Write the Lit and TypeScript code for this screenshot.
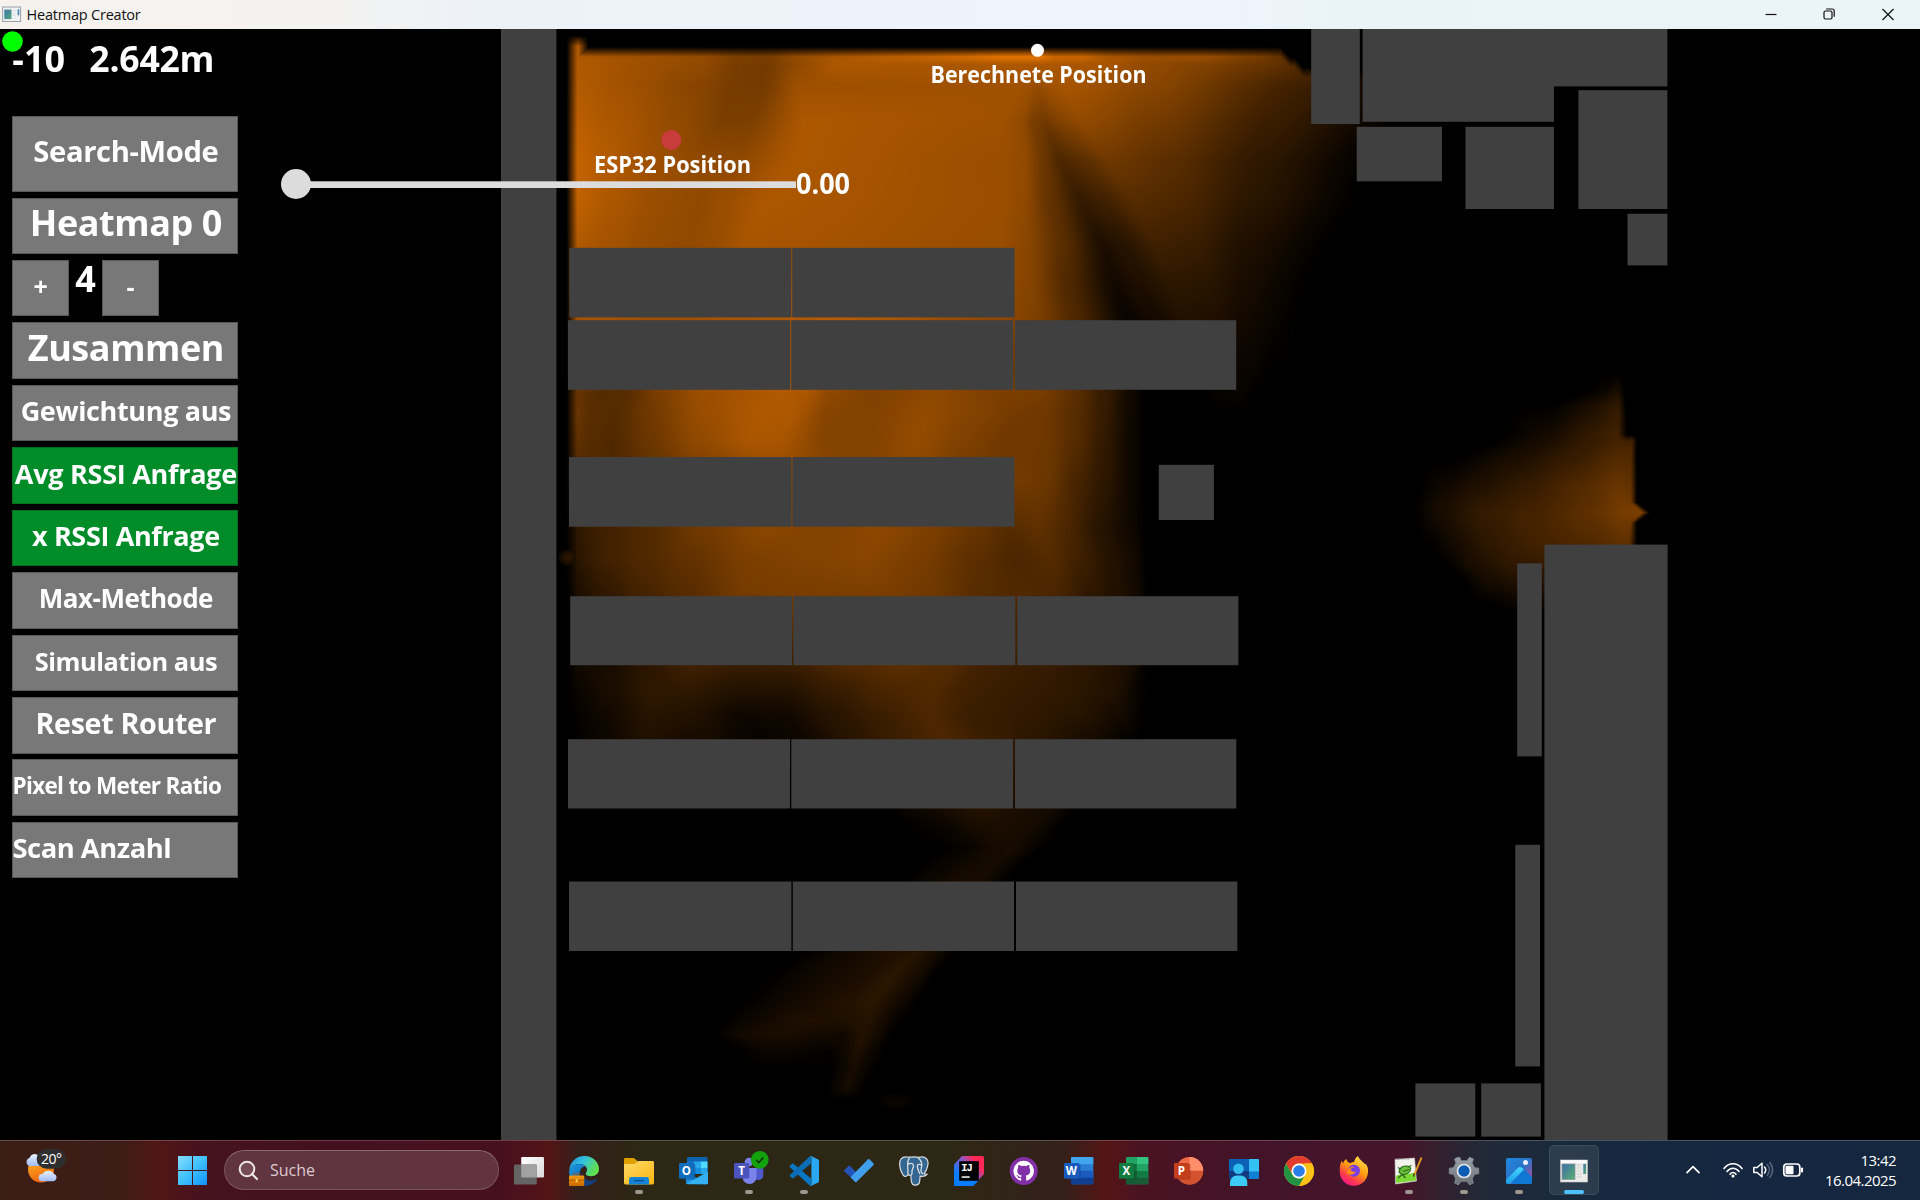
import { LitElement, html, css, svg, type TemplateResult } from "lit";
import { customElement, property } from "lit/decorators.js";
import { classMap } from "lit/directives/class-map.js";

/* ------------------------------------------------------------------ */
/* Heat field: rows of [x, intensity] stops, blended between rows.     */
/* Neighbouring rows with the same stop count are warped into each     */
/* other, so slanted ridges and valleys stay continuous.               */
/* ------------------------------------------------------------------ */

type Row = { y: number; s: number[] };

const MAIN: Row[] = [
  { y: 56, s: [572, 175, 640, 160, 700, 150, 740, 125, 765, 122, 800, 150, 840, 172, 900, 190, 960, 210, 1000, 232, 1040, 232, 1055, 205, 1080, 205, 1110, 170, 1150, 155, 1200, 155, 1260, 120, 1284, 95, 1311, 80] },
  { y: 64, s: [572, 178, 640, 158, 700, 145, 740, 118, 765, 115, 800, 145, 835, 172, 900, 170, 1000, 172, 1040, 172, 1100, 168, 1150, 145, 1200, 130, 1260, 105, 1300, 85, 1340, 60] },
  { y: 85, s: [572, 180, 620, 162, 700, 135, 735, 118, 762, 116, 800, 158, 1020, 160, 1030, 157, 1034, 152, 1038, 150, 1050, 162, 1065, 168, 1150, 138, 1300, 62, 1400, 0] },
  { y: 120, s: [572, 188, 610, 172, 680, 145, 725, 122, 750, 124, 805, 172, 1000, 160, 1022, 145, 1032, 122, 1044, 114, 1062, 132, 1080, 146, 1160, 115, 1270, 58, 1400, 0] },
  { y: 160, s: [572, 200, 600, 182, 650, 158, 700, 145, 735, 142, 795, 172, 1000, 154, 1024, 146, 1044, 105, 1060, 76, 1085, 92, 1108, 110, 1170, 90, 1260, 46, 1372, 0] },
  { y: 200, s: [572, 195, 610, 172, 660, 152, 700, 145, 725, 155, 765, 172, 1000, 155, 1022, 145, 1050, 98, 1080, 52, 1105, 64, 1132, 86, 1180, 76, 1255, 41, 1360, 0] },
  { y: 245, s: [572, 178, 610, 162, 650, 150, 690, 145, 712, 150, 745, 168, 1000, 153, 1025, 138, 1062, 90, 1102, 28, 1125, 38, 1155, 62, 1195, 56, 1245, 30, 1332, 0] },
  { y: 280, s: [572, 172, 610, 168, 650, 165, 690, 162, 720, 165, 760, 170, 1000, 150, 1028, 134, 1068, 78, 1112, 18, 1138, 30, 1170, 46, 1205, 42, 1245, 24, 1312, 0] },
  { y: 318, s: [572, 165, 610, 165, 650, 160, 690, 160, 740, 168, 840, 183, 1000, 142, 1035, 126, 1075, 78, 1125, 9, 1150, 18, 1185, 33, 1215, 30, 1245, 18, 1300, 0] },
  { y: 370, s: [572, 120, 620, 110, 700, 150, 780, 180, 870, 130, 950, 140, 1020, 110, 1060, 80, 1110, 40, 1135, 6, 1160, 8, 1200, 12, 1250, 9, 1272, 0] },
  { y: 392, s: [572, 105, 600, 84, 625, 86, 660, 124, 700, 155, 780, 176, 805, 172, 830, 142, 870, 128, 935, 142, 990, 125, 1040, 120, 1075, 92, 1105, 52, 1128, 20, 1146, 0, 1200, 0, 1215, 7, 1240, 8, 1255, 0] },
  { y: 412, s: [572, 110, 590, 90, 615, 84, 650, 112, 700, 152, 760, 175, 790, 174, 828, 134, 870, 130, 925, 146, 980, 130, 1015, 116, 1045, 110, 1075, 86, 1105, 52, 1128, 18, 1146, 0] },
  { y: 440, s: [572, 98, 590, 86, 612, 80, 650, 108, 700, 145, 750, 170, 780, 168, 825, 132, 870, 130, 915, 148, 960, 128, 1010, 110, 1045, 110, 1075, 86, 1105, 48, 1130, 14, 1146, 0] },
  { y: 480, s: [572, 80, 620, 80, 700, 120, 780, 145, 850, 135, 910, 140, 980, 110, 1020, 116, 1048, 106, 1075, 72, 1105, 44, 1130, 14, 1146, 0] },
  { y: 530, s: [572, 44, 600, 62, 650, 82, 700, 112, 765, 138, 820, 130, 880, 140, 930, 124, 975, 102, 1008, 84, 1040, 94, 1065, 76, 1100, 38, 1130, 16, 1147, 0] },
  { y: 558, s: [572, 38, 605, 64, 640, 78, 690, 98, 750, 124, 800, 130, 865, 136, 920, 120, 975, 92, 1018, 74, 1050, 84, 1080, 62, 1110, 36, 1133, 20, 1147, 0] },
  { y: 592, s: [572, 26, 605, 48, 640, 68, 690, 88, 745, 118, 810, 122, 875, 124, 930, 112, 980, 86, 1020, 80, 1055, 74, 1090, 46, 1120, 30, 1138, 16, 1147, 0] },
  { y: 668, s: [572, 16, 610, 24, 650, 44, 690, 62, 740, 52, 790, 54, 850, 78, 905, 90, 945, 82, 985, 62, 1040, 54, 1090, 42, 1125, 28, 1148, 0] },
  { y: 690, s: [572, 8, 610, 26, 650, 46, 690, 46, 735, 34, 785, 34, 830, 52, 880, 72, 930, 80, 965, 64, 1010, 54, 1060, 48, 1110, 34, 1148, 0] },
  { y: 715, s: [572, 3, 600, 14, 650, 38, 690, 34, 740, 14, 785, 16, 830, 38, 880, 58, 930, 76, 970, 58, 1030, 48, 1080, 38, 1120, 20, 1146, 0] },
  { y: 738, s: [572, 2, 600, 12, 645, 32, 700, 22, 760, 6, 800, 14, 850, 40, 900, 60, 943, 76, 985, 58, 1040, 42, 1090, 22, 1135, 2, 1142, 0] },
  { y: 770, s: [840, 0, 900, 20, 980, 44, 1030, 36, 1080, 14, 1110, 0] },
  { y: 810, s: [880, 0, 920, 14, 982, 36, 1015, 26, 1050, 20, 1075, 0] },
  { y: 830, s: [905, 0, 945, 8, 978, 22, 1003, 26, 1030, 20, 1060, 0] },
  { y: 847, s: [935, 0, 965, 7, 995, 20, 1015, 22, 1045, 0] },
  { y: 863, s: [922, 0, 940, 8, 970, 18, 995, 20, 1025, 0] },
  { y: 880, s: [902, 0, 925, 10, 955, 20, 980, 22, 1010, 0] },
  { y: 915, s: [850, 0, 890, 18, 935, 34, 960, 20, 980, 0] },
  { y: 953, s: [795, 0, 850, 18, 890, 30, 915, 38, 930, 24, 955, 0] },
  { y: 975, s: [765, 0, 815, 16, 860, 26, 893, 42, 915, 24, 935, 0] },
  { y: 1003, s: [738, 0, 790, 18, 840, 32, 872, 42, 895, 20, 918, 0] },
  { y: 1020, s: [718, 0, 760, 16, 800, 30, 840, 30, 868, 36, 882, 22, 902, 0] },
  { y: 1035, s: [712, 0, 740, 18, 775, 26, 815, 20, 842, 14, 862, 34, 876, 20, 892, 0] },
  { y: 1050, s: [735, 0, 775, 14, 800, 8, 830, 4, 845, 16, 858, 30, 870, 14, 884, 0] },
  { y: 1068, s: [830, 0, 842, 12, 853, 24, 864, 12, 876, 0] },
  { y: 1088, s: [826, 0, 836, 12, 846, 22, 856, 10, 864, 0] },
  { y: 1100, s: [826, 0, 864, 0] },
];

const EAST: Row[] = [
  { y: 374, s: [1600, 0, 1624, 0] },
  { y: 388, s: [1586, 0, 1606, 8, 1617, 22, 1625, 0] },
  { y: 405, s: [1550, 0, 1590, 24, 1618, 48, 1626, 0] },
  { y: 434, s: [1500, 0, 1550, 22, 1590, 50, 1617, 66, 1627, 0] },
  { y: 441, s: [1490, 0, 1545, 24, 1590, 52, 1618, 68, 1631, 66, 1637, 0] },
  { y: 460, s: [1450, 0, 1510, 26, 1570, 54, 1618, 84, 1630, 84, 1637, 0] },
  { y: 486, s: [1418, 0, 1440, 14, 1480, 32, 1530, 54, 1580, 82, 1618, 104, 1630, 98, 1637, 0] },
  { y: 502, s: [1412, 0, 1440, 22, 1480, 44, 1530, 62, 1590, 90, 1622, 114, 1630, 110, 1637, 0] },
  { y: 512, s: [1412, 0, 1440, 24, 1480, 50, 1530, 66, 1590, 94, 1622, 118, 1641, 124, 1650, 0] },
  { y: 522, s: [1414, 0, 1442, 22, 1480, 48, 1530, 68, 1590, 90, 1622, 110, 1630, 106, 1637, 0] },
  { y: 545, s: [1430, 0, 1455, 20, 1490, 46, 1540, 66, 1590, 80, 1628, 94, 1637, 0] },
  { y: 565, s: [1446, 0, 1470, 24, 1510, 46, 1545, 52, 1600, 30] },
  { y: 583, s: [1464, 0, 1490, 22, 1520, 30, 1545, 34, 1600, 0] },
  { y: 603, s: [1490, 0, 1515, 10, 1545, 12, 1580, 0] },
  { y: 612, s: [1490, 0, 1580, 0] },
];

function fillLine(s: number[], x0: number, out: Float32Array) {
  let k = 2;
  const n = s.length;
  for (let i = 0; i < out.length; i++) {
    const x = x0 + i;
    if (x <= s[0]) { out[i] = s[1]; continue; }
    while (k < n && x > s[k]) k += 2;
    if (k >= n) { out[i] = 0; continue; }
    const t = (x - s[k - 2]) / (s[k] - s[k - 2]);
    const e = (t * t * (3 - 2 * t) + t) / 2;
    out[i] = s[k - 1] + (s[k + 1] - s[k - 1]) * e;
  }
}

const ramp = (v: number, a: number, b: number) => Math.max(0, Math.min(1, (v - a) / (b - a)));

function addMesh(field: Float32Array, rows: Row[], x0: number, y0: number, w: number, h: number) {
  const la = new Float32Array(w);
  const lb = new Float32Array(w);
  let k = 0;
  for (let j = 0; j < h; j++) {
    const y = y0 + j;
    if (y > rows[rows.length - 1].y) break;
    while (k < rows.length - 2 && y > rows[k + 1].y) k++;
    const a = rows[k];
    const b = rows[k + 1];
    const t = ramp(y, a.y, b.y);
    if (a.s.length === b.s.length) {
      fillLine(a.s.map((v, i) => v + (b.s[i] - v) * t), x0, la);
    } else {
      fillLine(a.s, x0, la);
      fillLine(b.s, x0, lb);
      for (let i = 0; i < w; i++) la[i] += (lb[i] - la[i]) * t;
    }
    for (let i = 0; i < w; i++) if (la[i] > field[j * w + i]) field[j * w + i] = la[i];
  }
}

function addSpot(field: Float32Array, w: number, x0: number, y0: number, cx: number, cy: number, rx: number, ry: number, v: number) {
  for (let y = Math.floor(cy - ry); y <= cy + ry; y++) {
    for (let x = Math.floor(cx - rx); x <= cx + rx; x++) {
      const d = Math.hypot((x - cx) / rx, (y - cy) / ry);
      const p = v * Math.max(0, 1 - d * d);
      const i = (y - y0) * w + (x - x0);
      if (p > field[i]) field[i] = p;
    }
  }
}

function paintHeat(canvas: HTMLCanvasElement) {
  const x0 = 556;
  const y0 = 29;
  const w = 1112;
  const h = 1111;
  canvas.width = w;
  canvas.height = h;
  const field = new Float32Array(w * h);
  addMesh(field, MAIN, x0, y0, w, h);
  // outer limits of the measured area
  for (let j = 0; j < h; j++) {
    const y = y0 + j;
    for (let i = 0; i < 830; i++) {
      const x = x0 + i;
      const corner = ramp(y, 35, 46) * (1 - ramp(x, 578, 588));
      const edge = 51.5 + 10.5 * ramp(x, 1280, 1290) + 10 * ramp(x, 1294, 1303);
      field[j * w + i] *= ramp(x, 566, 577) * Math.max(corner, ramp(y, edge - 5, edge + 5));
    }
  }
  addMesh(field, EAST, x0, y0, w, h);
  addSpot(field, w, x0, y0, 568, 557, 11, 9, 42);
  addSpot(field, w, x0, y0, 895, 1101, 20, 9, 10);
  const ctx = canvas.getContext("2d")!;
  const img = ctx.createImageData(w, h);
  for (let p = 0; p < w * h; p++) {
    const v = field[p];
    img.data[p * 4] = v;
    img.data[p * 4 + 1] = v * 0.505;
    img.data[p * 4 + 2] = 0;
    img.data[p * 4 + 3] = 255;
  }
  ctx.putImageData(img, 0, 0);
}

/* ------------------------------------------------------------------ */
/* Floor plan                                                          */
/* ------------------------------------------------------------------ */

/** Obstacles as left, top, right, bottom in window coordinates. */
const BLOCKS: number[][] = [
  [501, 29, 556.4, 1140],
  [569.3, 247.8, 791.3, 317.4], [792.2, 247.8, 1014.6, 317.4],
  [568, 320.2, 790.3, 389.8], [791.2, 320.2, 1013.2, 389.8], [1014.9, 320.2, 1236.2, 389.8],
  [569, 457, 791.5, 526.7], [792.4, 457, 1014.4, 526.7],
  [570.2, 596.2, 792, 665.2], [793.3, 596.2, 1015.3, 665.2], [1017.2, 596.2, 1238.4, 665.2],
  [568, 739.2, 790, 808.5], [791.3, 739.2, 1013, 808.5], [1015, 739.2, 1236.3, 808.5],
  [569, 881.5, 791.4, 951], [792.8, 881.5, 1014, 951], [1016, 881.5, 1237.3, 951],
  [1158.8, 464.8, 1213.9, 520],
  [1311.2, 29, 1359.8, 124], [1362.6, 29, 1554, 121.8], [1553, 29, 1667.4, 86.4],
  [1356.7, 126.8, 1442, 181.3], [1465.5, 126.8, 1554, 209], [1578.4, 90.2, 1667.4, 209],
  [1627.5, 213.8, 1667.4, 265.4],
  [1544.4, 544.6, 1667.6, 1140], [1517.2, 563.4, 1541.8, 756.4], [1515.3, 844.8, 1540, 1066.4],
  [1415.4, 1083.4, 1475.3, 1136.6], [1481.2, 1083.4, 1540.9, 1136.6],
];

@customElement("floor-plan")
export class FloorPlan extends LitElement {
  static styles = css`
    :host { display: block; position: absolute; inset: 0; overflow: hidden; }
    .heat { position: absolute; left: 556px; top: 0; width: 1112px; height: 1111px; }
    .plan { position: absolute; inset: 0; width: 1920px; height: 1111px; display: block; }
    .block { fill: #404040; }
    .tag { fill: #fff; font: 700 23px "Open Sans", sans-serif; }
    .value { fill: #fff; font: 700 28px "Open Sans", sans-serif; }
  `;

  firstUpdated() {
    paintHeat(this.renderRoot.querySelector("canvas")!);
  }

  render() {
    return html`
      <canvas class="heat"></canvas>
      <svg class="plan" viewBox="0 29 1920 1111">
        ${BLOCKS.map(([l, t, r, b]) => svg`<rect class="block" x=${l} y=${t} width=${r - l} height=${b - t}></rect>`)}
        <circle cx="12.5" cy="41.5" r="10.3" fill="#0f0"></circle>
        <circle cx="1037.5" cy="50.3" r="6.5" fill="#fff"></circle>
        <text class="tag" x="930.5" y="82.5" textLength="216" lengthAdjust="spacingAndGlyphs">Berechnete Position</text>
        <circle cx="671.3" cy="140" r="10" fill="#c83c3c"></circle>
        <text class="tag" x="594" y="172.500" textLength="157" lengthAdjust="spacingAndGlyphs">ESP32 Position</text>
        <rect x="296" y="181.3" width="500" height="6.7" fill="#dcdcdc"></rect>
        <circle cx="296" cy="184" r="15" fill="#dcdcdc"></circle>
        <text class="value" x="796" y="193.8" textLength="54" lengthAdjust="spacingAndGlyphs">0.00</text>
      </svg>`;
  }
}

/* ------------------------------------------------------------------ */
/* Left control column                                                 */
/* ------------------------------------------------------------------ */

/** `track` is letter spacing in em. */
interface Control { label: string; size: number; track?: number; on?: boolean; start?: boolean; }

const CONTROLS: Control[] = [
  { label: "Zusammen", size: 36, track: -0.012 },
  { label: "Gewichtung aus", size: 27, track: -0.013 },
  { label: "Avg RSSI Anfrage", size: 27, track: -0.01, on: true },
  { label: "x RSSI Anfrage", size: 27, track: -0.013, on: true },
  { label: "Max-Methode", size: 26, track: -0.02 },
  { label: "Simulation aus", size: 25.4, track: -0.018 },
  { label: "Reset Router", size: 28.7, track: -0.012 },
  { label: "Pixel to Meter Ratio", size: 22.5, track: -0.03, start: true },
  { label: "Scan Anzahl", size: 27.4, track: -0.018, start: true },
];

@customElement("control-column")
export class ControlColumn extends LitElement {
  static styles = css`
    :host { display: flex; flex-direction: column; width: 226px; padding-left: 12.3px; position: relative;
      font-family: "Open Sans", sans-serif; font-weight: 700; color: #fff; }
    .reading { display: flex; height: 87.3px; font-size: 35.6px; line-height: 59.5px; white-space: pre; }
    .rssi { width: 77px; font-size: 36px; }
    .dist { letter-spacing: -0.25px; }
    .list { display: flex; flex-direction: column; gap: 5.95px; }
    .btn { box-sizing: border-box; height: 56.5px; width: 225.7px; background: #787878; border: 1px solid #585858;
      display: flex; align-items: center; justify-content: center; white-space: nowrap; }
    .btn.tall { height: 75.3px; }
    .btn.on { background: #008c28; border-color: #03701f; }
    .btn.start { justify-content: flex-start; }
    .btn.square { width: 56.6px; }
    .text { padding-bottom: 0.17em; padding-left: 1.5px; }
    .start .text { padding-left: 0; margin-left: -0.8px; }
    .stepper { display: flex; height: 56.5px; }
    .count { width: 33.4px; text-align: center; font-size: 36px; line-height: 38px; }
    .sign { font-size: 25px; padding-bottom: 5px; }
  `;

  private button(c: Control, tall = false) {
    return html`<div class=${classMap({ btn: true, tall, on: !!c.on, start: !!c.start })}>
      <span class="text" style="font-size:${c.size}px;letter-spacing:${c.track ?? 0}em">${c.label}</span>
    </div>`;
  }

  render() {
    return html`
      <div class="reading"><span class="rssi">-10</span><span class="dist">2.642m</span></div>
      <div class="list">
        ${this.button({ label: "Search-Mode", size: 29.2, track: -0.012 }, true)}
        ${this.button({ label: "Heatmap 0", size: 36, track: -0.012 })}
        <div class="stepper">
          <div class="btn square"><span class="sign">+</span></div>
          <div class="count">4</div>
          <div class="btn square"><span class="sign">-</span></div>
        </div>
        ${CONTROLS.map((c) => this.button(c))}
      </div>`;
  }
}

/* ------------------------------------------------------------------ */
/* Taskbar icons, each on a 30 x 30 grid                               */
/* ------------------------------------------------------------------ */

const appWindow = svg`
  <defs><linearGradient id="awg" x1="0" y1="0" x2="1" y2="1"><stop offset="0" stop-color="#3f6fa8"></stop><stop offset="1" stop-color="#58b070"></stop></linearGradient></defs>
  <rect x="1.5" y="4" width="27" height="22" fill="#ecebea" stroke="#c9c9c9" stroke-width=".6"></rect>
  <rect x="2" y="4.4" width="26" height="2.2" fill="#fff"></rect>
  <rect x="3" y="8" width="13" height="15.6" fill="url(#awg)" stroke="#8d93a8" stroke-width=".7"></rect>
  <path d="M17.5 9h5M17.5 12h5M17.5 15h5M17.5 18h5M17.5 21h5" stroke="#d2d2d2" stroke-width="1.2"></path>
  <rect x="24.3" y="8" width="2.8" height="10" fill="url(#awg)"></rect>`;

const officeTile = (letter: string, bg: string, shade: string) => svg`
  <rect x="2" y="8" width="14.5" height="15.5" rx="1" fill=${shade} opacity=".5"></rect>
  <rect x="0" y="7" width="15.3" height="15.6" rx="1.2" fill=${bg}></rect>
  <text x="7.4" y="18.9" text-anchor="middle" font-family="Open Sans" font-weight="700" font-size="11.5" fill="#fff">${letter}</text>`;

const ICONS: Record<string, TemplateResult<2>> = {
  taskview: svg`
    <defs><linearGradient id="tv" x2="1" y2="1"><stop stop-color="#fff"></stop><stop offset="1" stop-color="#d9d9d9"></stop></linearGradient></defs>
    <rect x="7.2" y="1" width="22.8" height="20.4" rx="1.2" fill="url(#tv)"></rect>
    <rect x="0" y="8.6" width="22.8" height="20" rx="1.2" fill="#646464"></rect>
    <path d="M7.2 8.6H21.6a1.2 1.2 0 0 1 1.2 1.2V21.4H8.4a1.2 1.2 0 0 1-1.2-1.2z" fill="#a2a2a2"></path>`,
  edge: svg`
    <defs><linearGradient id="ed1" x2="1" y2=".4"><stop stop-color="#1f8fdc"></stop><stop offset=".5" stop-color="#33c1de"></stop><stop offset="1" stop-color="#5fe04f"></stop></linearGradient>
    <linearGradient id="ed2" x2=".6" y2="1"><stop stop-color="#1b9de2"></stop><stop offset="1" stop-color="#1260b8"></stop></linearGradient>
    <linearGradient id="ed3" x2="0" y2="1"><stop stop-color="#f59a13"></stop><stop offset="1" stop-color="#c96a00"></stop></linearGradient></defs>
    <path d="M.2 15C.8 6 7 0 15.2 0 24 0 30 6.4 30 13c0 4.4-3.3 7.2-7.6 7.2-3.9 0-5.7-1.3-5.7-2.5 0-.8 1.3-1.5 1.3-3.9 0-3.200-3.300-5.800-7.300-5.800C5.800 8 1.800 10.600.2 15z" fill="url(#ed1)"></path>
    <path d="M.1 15.200C1.500 10.800 5.400 8 10.600 8c2.500 0 4.500.9 5.800 2.200-3.500.3-5.700 3.700-5.700 7.300V30C4.600 28.500 0 22.500.1 15.200z" fill="url(#ed2)"></path>
    <path d="M12 14.600C12 22 18.500 25.500 23 24.500c2-.4 3.600-1.500 4.800-1.800.5 0 .5.400.2.900C25.300 27.700 20.700 30 16 30H12z" fill="#123f80"></path>
    <rect x="0" y="19.500" width="15.200" height="10.500" rx=".8" fill="url(#ed3)"></rect>
    <path d="M4.500 19.400v-1.500h6v1.500" fill="none" stroke="#a85a00" stroke-width="1"></path>
    <path d="M0 24.200h15.200" stroke="#a55400" stroke-width=".9"></path><rect x="6.700" y="23.200" width="2" height="3" fill="#ffd24d"></rect>`,
  folder: svg`
    <defs><linearGradient id="fo" x2=".8" y2="1"><stop stop-color="#ffd968"></stop><stop offset="1" stop-color="#fbb917"></stop></linearGradient></defs>
    <path d="M0 3.400A1.400 1.400 0 0 1 1.400 2h7.800c.8 0 1.300.3 1.900.9L13.400 5 11 9H0z" fill="#e0a000"></path>
    <path d="M0 8h9.500c.8 0 1.300-.2 1.900-.8l1.400-1.400c.6-.5 1.100-.8 1.900-.8h13.900A1.400 1.400 0 0 1 30 6.400V27a1.400 1.400 0 0 1-1.400 1.400H1.400A1.400 1.400 0 0 1 0 27z" fill="url(#fo)"></path>
    <path d="M5 28.400v-5A2.400 2.400 0 0 1 7.400 21h15.200a2.400 2.400 0 0 1 2.400 2.400v5z" fill="#1583d6"></path>
    <path d="M10 24.600h10" stroke="#0a4c94" stroke-width="1.300"></path>`,
  outlook: svg`
    <rect x="8" y="1" width="20.500" height="17" rx="1.200" fill="#0f62b0"></rect>
    <rect x="8" y="5.500" width="7" height="6.500" fill="#1478cf"></rect><rect x="15" y="5.500" width="7" height="6.500" fill="#28a8ea"></rect><rect x="22" y="5.500" width="6.500" height="6.500" fill="#50d9ff"></rect>
    <rect x="15" y="12" width="7" height="6" fill="#1490df"></rect><rect x="22" y="12" width="6.500" height="6" fill="#28a8ea"></rect>
    <path d="M7 15.500l11.500 7L29 15.500V27a1.300 1.300 0 0 1-1.300 1.300H8.300A1.300 1.300 0 0 1 7 27z" fill="#1b8ee0"></path>
    <path d="M7 28l22-12.500V27a1.300 1.300 0 0 1-1.300 1.300z" fill="#35b0f2"></path>
    ${officeTile("O", "#0f6cbd", "#0a4f96")}`,
  teams: svg`
    <circle cx="15" cy="6" r="4.300" fill="#7b83eb"></circle><circle cx="25" cy="8" r="3" fill="#5059c9"></circle>
    <path d="M20 12h8.300c.6 0 1 .4 1 1v6.500a5 5 0 0 1-9.300 2z" fill="#5059c9"></path>
    <path d="M9.500 12h12c.6 0 1 .4 1 1v8a7 7 0 0 1-14 0z" fill="#7b83eb"></path>
    <rect x="0" y="7" width="15.300" height="15.600" rx="1.200" fill="#4b53bc"></rect>
    <text x="7.500" y="18.900" text-anchor="middle" font-family="Open Sans" font-weight="700" font-size="11.500" fill="#fff">T</text>
    <circle cx="25.800" cy="3.800" r="8.900" fill="#13a10e"></circle>
    <path d="M22.300 4l2.500 2.600L29.300 1.600" fill="none" stroke="#0a2d0a" stroke-width="1.500"></path>`,
  vscode: svg`
    <path d="M1 9.500l2.200-1.700c.4-.3.900-.3 1.300 0L22 22.500V29.500c-.5.300-1.100.2-1.600-.3L1 11.300c-.5-.5-.5-1.300 0-1.800z" fill="#0878c4"></path>
    <path d="M1 20.500l2.200 1.700c.4.300.9.300 1.300 0L22 7.500V.5c-.5-.3-1.100-.2-1.600.3L1 18.700c-.5.500-.5 1.300 0 1.800z" fill="#0a6db5"></path>
    <path d="M20.400.7c.5-.6 1.300-.8 2-.5l6.400 3c.8.400 1.200 1 1.200 1.800v20c0 .8-.4 1.400-1.200 1.800l-6.400 3c-.7.300-1.500.1-2-.5.800.7 2 .1 2-.9V1.600c0-1-1.200-1.600-2-.9z" fill="#2aa7f2"></path>`,
  todo: svg`
    <path d="M0 14.500l5.300-5.300 7 7L7 21.500 .5 15.500z" fill="#2454b8"></path>
    <path d="M24 3.300c.4-.4 1-.4 1.400 0l4.200 4.200c.4.400.4 1 0 1.400L12.500 26c-.4.400-1 .4-1.400 0L6.500 21.300z" fill="#3f9fec"></path>`,
  postgres: svg`
    <path d="M8 1C2.500.5.300 4 .6 8.500 1 14 3.500 19.500 6 20.500c1.500.3 2.300-1 3.200-2 .6.600 1.800.9 2.800.8-.1 3-.2 6.700 1.600 9 1.700 1.500 5.400 1 6.600-1.200.8-1.700.7-4.600.9-6.900 2.500.3 6-.2 7-1.900-1.200 0-2.300 0-3-.6 3-3.800 5-10.500 3.400-13.500C26.500.5 22.500.6 19.500 1.400 15.500.300 11.500 1.500 8 1z" fill="#336791" stroke="#d9dde2" stroke-width="1.200"></path>
    <path d="M10.500 2C8 5 8.500 11 9 14.500c.2 1.800-.5 2.800.3 4M19 1.800c3.500 2.700 4.500 7 3.300 10.700-.9 2.300-.7 3.700 1.700 5.500M9.200 8.500c1.500-1.600 5-1.500 5.300 1 .3 3-2 3.500-1.500 6.500.2 1 .2 2-.7 3.200M22.500 9c-1.500-1.300-4.200-.7-4.200 1.200 0 2.500 1.500 5 2.500 7.800" fill="none" stroke="#d9dde2" stroke-width="1.300"></path>`,
  intellij: svg`
    <defs><linearGradient id="ij" x1="0" y1=".9" x2="1" y2=".1"><stop offset=".2" stop-color="#087cfa"></stop><stop offset=".55" stop-color="#8b59c9"></stop><stop offset=".8" stop-color="#fe2857"></stop></linearGradient></defs>
    <path d="M8 0h20.500A1.500 1.500 0 0 1 30 1.500V18L19 30H1.500A1.500 1.500 0 0 1 0 28.500V8.500z" fill="url(#ij)"></path>
    <path d="M0 14v14.500A1.500 1.500 0 0 0 1.500 30H19l6-6H6z" fill="#087cfa"></path>
    <rect x="5.200" y="5.200" width="19.600" height="19.600" fill="#000"></rect>
    <text x="7.300" y="14.500" font-family="Liberation Mono" font-weight="700" font-size="10.500" letter-spacing="-1" fill="#fff">IJ</text><rect x="7.700" y="20.300" width="8" height="1.500" fill="#fff"></rect>`,
  github: svg`
    <circle cx="14.700" cy="15" r="14" fill="#8230a8"></circle>
    <path d="M14.700 4.800a10.200 10.200 0 0 0-3.200 19.900c.5.100.7-.2.700-.5v-2c-2.800.6-3.400-1.200-3.400-1.200-.5-1.200-1.100-1.500-1.100-1.500-.9-.6.100-.6.100-.6 1 .1 1.600 1.100 1.600 1.100.9 1.600 2.400 1.100 2.900.9.100-.7.400-1.100.6-1.400-2.200-.3-4.600-1.100-4.600-5 0-1.100.4-2 1-2.700-.1-.3-.4-1.300.1-2.700 0 0 .9-.3 2.800 1a9.600 9.600 0 0 1 5.100 0c1.900-1.300 2.800-1 2.800-1 .5 1.400.2 2.400.1 2.700.6.700 1 1.600 1 2.700 0 3.900-2.400 4.800-4.700 5 .4.400.7 1 .7 1.900v2.800c0 .3.200.6.700.5a10.200 10.200 0 0 0-3.200-19.900z" fill="#fff"></path>`,
  word: svg`
    <rect x="7" y="1" width="22.300" height="27.300" rx="1.300" fill="#2b7cd3"></rect><path d="M8.300 1H28a1.300 1.300 0 0 1 1.300 1.300v6H7v-6A1.300 1.300 0 0 1 8.300 1z" fill="#41a5ee"></path>
    <rect x="7" y="14.700" width="22.300" height="6.800" fill="#185abd"></rect><path d="M7 21.500h22.300V27a1.300 1.300 0 0 1-1.300 1.300H8.300A1.300 1.300 0 0 1 7 27z" fill="#103f91"></path>
    ${officeTile("W", "#185abd", "#0c3a80")}`,
  excel: svg`
    <rect x="7" y="1" width="22.300" height="27.300" rx="1.300" fill="#21a366"></rect><path d="M18 1h10a1.300 1.300 0 0 1 1.300 1.300v5.700H18z" fill="#33c481"></path>
    <rect x="7" y="8" width="11" height="7" fill="#107c41"></rect><rect x="18" y="15" width="11.300" height="6.500" fill="#107c41"></rect><rect x="7" y="15" width="11" height="13.300" fill="#185c37"></rect><path d="M18 21.500h11.300V27a1.300 1.300 0 0 1-1.300 1.300H18z" fill="#185c37"></path>
    ${officeTile("X", "#107c41", "#0a4d28")}`,
  powerpoint: svg`
    <circle cx="15.500" cy="14.700" r="13.700" fill="#ed6c47"></circle><path d="M15.500 1a13.700 13.700 0 0 1 13.700 13.700H15.500z" fill="#ff8f6b"></path><path d="M1.800 14.700h27.400a13.700 13.700 0 0 1-27.400 0z" fill="#d35230"></path>
    ${officeTile("P", "#c43e1c", "#8f2a10")}`,
  people: svg`
    <rect x="0" y="3" width="30" height="20" rx="1" fill="#0f6cbd"></rect><rect x="0" y="3" width="20" height="12" fill="#0b62b4"></rect><rect x="20" y="3" width="10" height="15" rx="1" fill="#35c0f4"></rect><rect x="20" y="15.500" width="10" height="7.500" fill="#0f7fd4"></rect><rect x="0" y="15" width="20" height="8" fill="#123a7e"></rect>
    <circle cx="9.500" cy="12.800" r="5.300" fill="#32bdf0"></circle><path d="M1 30v-3.500A7 7 0 0 1 8 19.500h3.500a7 7 0 0 1 6.800 7V30z" fill="#3ccbf4"></path>`,
  chrome: svg`
    <circle cx="15" cy="15" r="15" fill="#fbc116"></circle>
    <path d="M2 7.500A15 15 0 0 1 28 7.500H15A7.500 7.500 0 0 0 8.500 18.700z" fill="#e33b2e"></path>
    <path d="M2 7.500l6.500 11.200A7.500 7.500 0 0 0 21.500 18.700L15 30A15 15 0 0 1 2 7.500z" fill="#229342"></path>
    <path d="M21.500 18.700A7.500 7.500 0 0 0 21.500 11.200L20.500 7.500H28A15 15 0 0 1 15 30z" fill="#fbc116"></path>
    <circle cx="15" cy="15" r="7.500" fill="#fff"></circle><circle cx="15" cy="15" r="5.800" fill="#2a7de9"></circle>`,
  firefox: svg`
    <defs><linearGradient id="ff" x1=".8" y1="0" x2=".2" y2="1"><stop stop-color="#ffe84d"></stop><stop offset=".45" stop-color="#ff980e"></stop><stop offset=".75" stop-color="#ff3750"></stop><stop offset="1" stop-color="#f0139a"></stop></linearGradient></defs>
    <path d="M28.500 11c-.6-1.700-2-3.400-3.200-4 1 1.800 1.300 3 1.300 3C25.500 6 20.500 4.500 19 0c-2.500 1.500-3.700 4.200-3.900 6-1.500.1-3 .5-4.200 1.200C8.500 6.300 7.300 4 7.500 3 5.500 4 4.500 6.200 4.200 7.200 3 6.800 3 4.500 3 4.500 1.500 6.300.6 10.500.8 14.500A14 14 0 0 0 28.900 17c.3-2 .3-4-.4-6z" fill="url(#ff)"></path>
    <circle cx="15" cy="14.800" r="6" fill="#7a3fe4"></circle><path d="M9 13.500c1.500-2.500 4-3 6-2.200-1 .5-2 1.200-3.500 1.500 0 2.200 2.500 3.800 5.500 2.700-1.500 3.500-7 4.500-9.500 1z" fill="#ff8a16"></path>`,
  notepad: svg`
    <path d="M1 3.500L20.500 2 22.500 25 1.500 28z" fill="#f3f3ee" stroke="#c9c9c0" stroke-width=".6"></path>
    <path d="M2 4v-2M5 4v-2M8 4v-2M11 4v-2M14 4v-2" stroke="#9a9a9a" stroke-width=".9"></path>
    <path d="M2 20c6-3 12-1 19.500-4l.7 8.500L2 27z" fill="#7bd835"></path>
    <path d="M5 16c0-4 4-6.500 8-6 3 .5 4 2 3.500 4-.5 2.500-5 5-8 4.500-2.500-.5-3-2-3.500-2.500z" fill="#68c03a" stroke="#2c6a18" stroke-width="1.100"></path>
    <path d="M4 22l4.500-3.500 3 3.500M13.500 11l4-1.500M7 13.500l-3-2M9 15.500l6-2" fill="none" stroke="#2c6a18" stroke-width="1.300"></path>
    <path d="M20 19.500L27.500 1.500" stroke="#e8a020" stroke-width="1.900"></path><path d="M19.500 20.500l.9-3" stroke="#4a2d10" stroke-width="1.300"></path>`,
  gear: svg`
    <defs><linearGradient id="gr" x2="0" y2="1"><stop stop-color="#9aa1a8"></stop><stop offset="1" stop-color="#6b7278"></stop></linearGradient></defs>
    <path d="M12.200 4.800L10.800 1.300 7.200 1.900 5.500 3.200 7 7 4.500 11.700.3 12.300v5.400l4.200.6L7 23l-1.500 3.800 3.800 2 2.900-3.600h5.600l2.900 3.600 3.800-2L23 23l2.500-4.700 4.200-.6v-5.400l-4.200-.6L23 7l1.500-3.800-3.800-2-2.900 3.600z" fill="url(#gr)" stroke="#7f868c" stroke-width="1" stroke-linejoin="round"></path>
    <circle cx="15" cy="15" r="7.300" fill="#e7eaed"></circle><circle cx="15" cy="15" r="5.700" fill="#0a5cb4"></circle>`,
  photos: svg`
    <defs><linearGradient id="ph" x2="1" y2="1"><stop stop-color="#1b8ae0"></stop><stop offset=".5" stop-color="#2b73c8"></stop><stop offset=".8" stop-color="#8d55a8"></stop></linearGradient>
    <linearGradient id="ph2" x2="0" y2="1"><stop stop-color="#48d6ff"></stop><stop offset="1" stop-color="#199be8"></stop></linearGradient></defs>
    <rect x="2" y="2" width="26" height="26" rx="2" fill="url(#ph)"></rect>
    <path d="M14.500 11.800a2.800 2.800 0 0 1 4 0L28 21v5a2 2 0 0 1-2 2H8z" fill="#0f78d4"></path>
    <path d="M2.500 23.500L13.800 12c1.500-1.500 3.300-1 4.500 0l1.500 1.500L6 28H4a2 2 0 0 1-2-2v-1.500z" fill="url(#ph2)"></path>
    <circle cx="21.500" cy="6.500" r="2.500" fill="#e8f1fb"></circle>`,
  heatmap: appWindow,
};

const APPS: { icon: string; running?: boolean; active?: boolean }[] = [
  { icon: "taskview" }, { icon: "edge" }, { icon: "folder", running: true }, { icon: "outlook" },
  { icon: "teams", running: true }, { icon: "vscode", running: true }, { icon: "todo" }, { icon: "postgres" },
  { icon: "intellij" }, { icon: "github" }, { icon: "word" }, { icon: "excel" }, { icon: "powerpoint" },
  { icon: "people" }, { icon: "chrome" }, { icon: "firefox" }, { icon: "notepad", running: true },
  { icon: "gear", running: true }, { icon: "photos", running: true }, { icon: "heatmap", active: true },
];

@customElement("app-icon")
export class AppIcon extends LitElement {
  @property() name = "";
  static styles = css`
    :host { display: block; width: 30px; height: 30px; }
    svg { display: block; overflow: visible; }
  `;
  render() {
    return html`<svg width="30" height="30" viewBox="0 0 30 30">${ICONS[this.name]}</svg>`;
  }
}

@customElement("task-bar")
export class TaskBar extends LitElement {
  static styles = css`
    :host { display: flex; box-sizing: border-box; height: 60px; border-top: 1px solid rgba(255, 255, 255, 0.2); color: #fff;
      font-family: "Open Sans", "Noto Sans", sans-serif;
      background: linear-gradient(90deg, #3b1e16 0, #3e1d17 120px, #501616 158px, #46121e 205px, #44101f 330px, #47101f 500px,
        #541416 548px, #34201a 578px, #2d2715 640px, #2d2715 950px, #33211a 1060px, #551416 1108px, #4a1322 1140px,
        #42142a 1280px, #45142a 1405px, #33202f 1440px, #222937 1480px, #192a3c 1560px, #162740 1650px, #14273f 1920px); }
    .weather { width: 178px; }
    .weather svg, .start svg { display: block; overflow: visible; }
    .start { width: 46px; padding-top: 15px; box-sizing: border-box; }
    .search { box-sizing: border-box; width: 275px; height: 40px; margin-top: 9px; border-radius: 20px; display: flex;
      align-items: center; padding-left: 13px; gap: 11px; background: rgba(255, 255, 255, 0.15);
      border: 1px solid rgba(255, 255, 255, 0.16); border-top-color: rgba(255, 255, 255, 0.26); }
    .hint { font-size: 16px; color: #dccbd0; padding-bottom: 0; }
    .apps { display: flex; padding-left: 2.5px; }
    .app { width: 55px; display: flex; flex-direction: column; align-items: center; padding-top: 4px; }
    .tile { box-sizing: border-box; width: 50px; height: 50px; border-radius: 5px; display: flex; flex-direction: column;
      align-items: center; padding-top: 10px; border: 1px solid transparent; }
    .mark { width: 8px; height: 3.7px; border-radius: 2px; margin-top: 4px; }
    .running .mark { background: #9e9790; }
    .active .tile { background: rgba(255, 255, 255, 0.09); border-color: rgba(255, 255, 255, 0.08); }
    .active .mark { width: 20px; background: #4cc2ff; }
    .tray { margin-left: auto; display: flex; padding-right: 24px; }
    .tray svg { display: block; margin-top: 9px; }
    .clock { width: 92px; text-align: right; font-size: 15px; line-height: 20px; padding-top: 8.5px; letter-spacing: -0.55px; }
  `;

  render() {
    return html`
      <div class="weather">
        <svg width="100" height="59" viewBox="0 1141 100 59">
          <defs>
            <linearGradient id="sun" x2=".3" y2="1"><stop stop-color="#fcbf2d"></stop><stop offset="1" stop-color="#f2660c"></stop></linearGradient>
            <linearGradient id="cl" x2="0" y2="1"><stop stop-color="#e9f1ff"></stop><stop offset="1" stop-color="#9fbcf3"></stop></linearGradient>
          </defs>
          <circle cx="41" cy="1169.5" r="13" fill="url(#sun)"></circle>
          <path d="M29.5 1166a4.2 4.2 0 0 1 0-8 6 6 0 0 1 11.5 1v7z" fill="url(#cl)"></path>
          <path d="M42 1181.3a3.6 3.6 0 0 1 .5-7.2 6.5 6.5 0 0 1 11.5 0 3.7 3.7 0 0 1-1 7.2z" fill="url(#cl)"></path>
          <rect x="36.7" y="1149" width="29" height="19.7" rx="9.8" fill="#2f2f2f"></rect>
          <text x="51.3" y="1164.2" text-anchor="middle" font-family="Open Sans" font-size="14" letter-spacing="-.4" fill="#fff">20°</text>
        </svg>
      </div>
      <div class="start">
        <svg width="29" height="29" viewBox="0 0 29 29">
          <defs><linearGradient id="win" gradientUnits="userSpaceOnUse" x1="0" y1="0" x2="29" y2="29"><stop stop-color="#86dcff"></stop><stop offset=".5" stop-color="#3fc0fd"></stop><stop offset="1" stop-color="#0f93fb"></stop></linearGradient></defs>
          <path d="M0 0h14v14H0zM15 0h14v14H15zM0 15h14v14H0zM15 15h14v14H15z" fill="url(#win)"></path>
        </svg>
      </div>
      <div class="search">
        <svg width="21" height="21" viewBox="0 0 21 21" fill="none" stroke="#efe6e8" stroke-width="2"><circle cx="9" cy="9" r="7.3" fill="rgba(255,255,255,.12)"></circle><path d="M14 14l5 5" stroke-linecap="round" stroke-width="2.2"></path></svg>
        <span class="hint">Suche</span>
      </div>
      <div class="apps">
        ${APPS.map((a) => html`
          <div class=${classMap({ app: true, running: !!a.running, active: !!a.active })}>
            <div class="tile"><app-icon .name=${a.icon}></app-icon><div class="mark"></div></div>
          </div>`)}
      </div>
      <div class="tray">
        <svg width="120" height="40" viewBox="1684 1150 120 40" fill="none" stroke="#fff" stroke-linecap="round" stroke-linejoin="round" stroke-width="1.7">
          <path d="M1687 1172.7l6-6 6 6"></path>
          <g stroke-width="1.6"><path d="M1724 1168.5c5-6.3 13-6.3 18 0M1727 1171.5c3.5-4.3 8.5-4.3 12 0M1730 1174.2c1.800-2.200 4.200-2.200 6 0"></path></g>
          <circle cx="1733" cy="1176" r="1.6" fill="#fff" stroke="none"></circle>
          <path d="M1753.8 1167.500h3.300l4.900-4.300v13.600l-4.900-4.300h-3.300z" stroke-width="1.5"></path>
          <path d="M1764.5 1167c1.500 1.800 1.500 4.200 0 6" stroke-width="1.5"></path>
          <path d="M1767.3 1164.600c2.700 3.200 2.700 7.600 0 10.800M1769.800 1162.500c3.700 4.500 3.700 10.500 0 15" stroke="#5c6b7d" stroke-width="1.4"></path>
          <rect x="1783.800" y="1164" width="16" height="12" rx="3"></rect>
          <rect x="1785.500" y="1165.800" width="8" height="8.400" rx="1" fill="#fff" stroke="none"></rect>
          <path d="M1802 1168.500v3" stroke-width="2.200"></path>
        </svg>
        <div class="clock"><div>13:42</div><div>16.04.2025</div></div>
      </div>`;
  }
}

@customElement("title-bar")
export class TitleBar extends LitElement {
  static styles = css`
    :host { display: flex; box-sizing: border-box; height: 29px; align-items: center; padding-left: 2.3px;
      background: linear-gradient(90deg, #f5f2ee 0, #f4f2ef 300px, #edf2f7 480px, #eef3fb 900px, #eff3fc 1220px, #eaf4f6 1330px, #ebf4f6 1920px);
      font-family: "Open Sans", "Noto Sans", sans-serif; color: #111; }
    .icon { display: block; }
    .name { margin-left: 4.3px; font-size: 14.5px; letter-spacing: -0.22px; }
    .keys { margin-left: auto; display: block; }
  `;
  render() {
    return html`
      <svg class="icon" width="20" height="17" viewBox="0 0 20 17">
        <defs><linearGradient id="t" x2="1" y2="1"><stop stop-color="#3f78a8"></stop><stop offset="1" stop-color="#55a57c"></stop></linearGradient></defs>
        <rect x=".6" y="1" width="18" height="14.5" fill="#eff1f3" stroke="#9aa2a8" stroke-width="1"></rect>
        <rect x="2.3" y="3.6" width="7.2" height="9.5" fill="url(#t)"></rect>
        <path d="M11 4.5h3M11 7h3M11 9.5h3M11 12h3" stroke="#dfe3e6"></path>
        <rect x="15.6" y="3.3" width="1.7" height="6" fill="#4a88b8"></rect>
      </svg>
      <span class="name">Heatmap Creator</span>
      <svg class="keys" width="160" height="29" viewBox="1760 0 160 29" fill="none" stroke="#111" stroke-width="1.2">
        <path d="M1765.5 14.5h11"></path>
        <rect x="1824" y="11" width="8" height="8" rx="1.5"></rect><path d="M1826.2 9h6a2 2 0 0 1 2 2v5.8"></path>
        <path d="M1882.5 9l11 11M1893.5 9l-11 11"></path>
      </svg>`;
  }
}

@customElement("app-root")
export class AppRoot extends LitElement {
  static styles = css`
    :host { display: flex; flex-direction: column; width: 1920px; height: 1200px; overflow: hidden; background: #000; }
    .stage { position: relative; height: 1111px; background: #000; overflow: hidden; }
  `;
  render() {
    return html`
      <title-bar></title-bar>
      <div class="stage">
        <floor-plan></floor-plan>
        <control-column></control-column>
      </div>
      <task-bar></task-bar>`;
  }
}
